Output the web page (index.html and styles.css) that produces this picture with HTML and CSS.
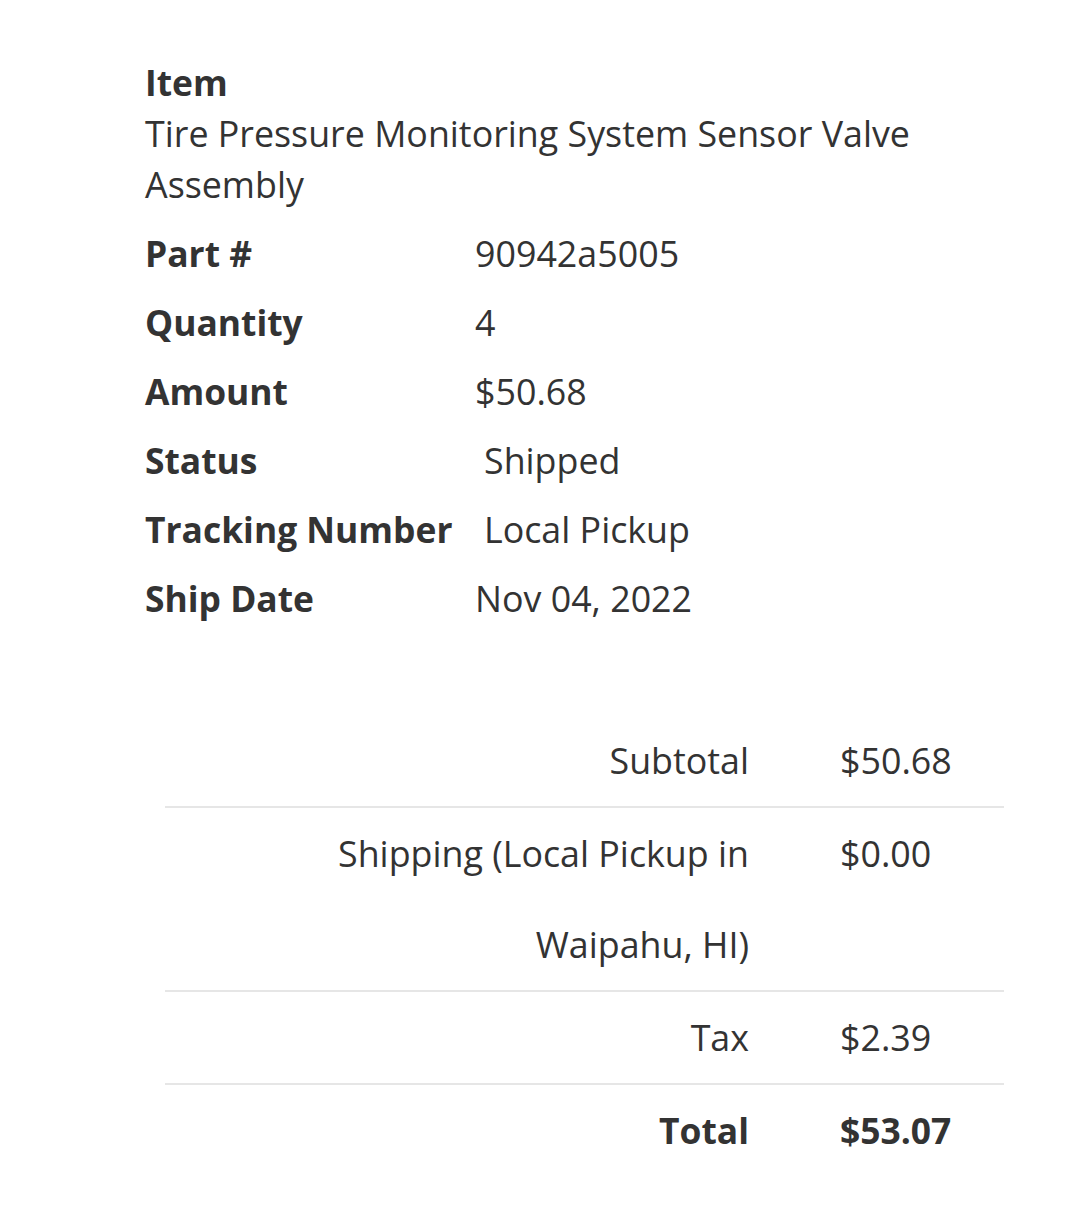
FILE: index.html
```html
<!DOCTYPE html>
<html lang="en">
<head>
<meta charset="utf-8">
<title>Order item</title>
<link rel="stylesheet" href="styles.css">
</head>
<body>
<main class="page">
  <section class="item">
    <div class="item-label">Item</div>
    <div class="item-name">Tire Pressure Monitoring System Sensor Valve Assembly</div>
  </section>
  <dl class="details">
    <div class="row"><dt>Part #</dt><dd>90942a5005</dd></div>
    <div class="row"><dt>Quantity</dt><dd>4</dd></div>
    <div class="row"><dt>Amount</dt><dd>$50.68</dd></div>
    <div class="row"><dt>Status</dt><dd class="indent">Shipped</dd></div>
    <div class="row"><dt>Tracking Number</dt><dd class="indent">Local Pickup</dd></div>
    <div class="row"><dt>Ship Date</dt><dd>Nov 04, 2022</dd></div>
  </dl>
  <div class="totals">
    <div class="trow"><div class="tlabel">Subtotal</div><div class="tvalue">$50.68</div></div>
    <div class="trow"><div class="tlabel">Shipping (Local Pickup in Waipahu, HI)</div><div class="tvalue">$0.00</div></div>
    <div class="trow"><div class="tlabel">Tax</div><div class="tvalue">$2.39</div></div>
    <div class="trow total"><div class="tlabel">Total</div><div class="tvalue">$53.07</div></div>
  </div>
</main>
</body>
</html>
```
FILE: styles.css
```css
html, body {
  margin: 0;
  padding: 0;
  background: #ffffff;
}
body {
  font-family: "Open Sans", "Noto Sans", sans-serif;
  color: #333333;
  font-size: 35.8px;
}
.page {
  padding: 57px 0 0 145px;
}
.item {
  line-height: 51px;
  width: 800px;
}
.item-label {
  font-weight: 700;
  font-size: 35.4px;
}
.details {
  margin: 18px 0 0 0;
  display: flex;
  flex-direction: column;
  gap: 18px;
}
.row {
  display: grid;
  grid-template-columns: 330px 1fr;
  line-height: 51px;
}
.row dt {
  font-weight: 700;
  font-size: 35.4px;
}
.row dd {
  margin: 0;
}
.row dd.indent {
  padding-left: 9px;
}
.totals {
  margin: 91px 0 0 20px;
  width: 839px;
}
.trow {
  display: grid;
  grid-template-columns: 584px 1fr;
  line-height: 91px;
  border-bottom: 2px solid #e6e6e6;
}
.trow.total {
  border-bottom: none;
  font-weight: 700;
  font-size: 35.4px;
}
.tlabel {
  text-align: right;
  padding-left: 130px;
}
.tvalue {
  padding-left: 91px;
}
```
